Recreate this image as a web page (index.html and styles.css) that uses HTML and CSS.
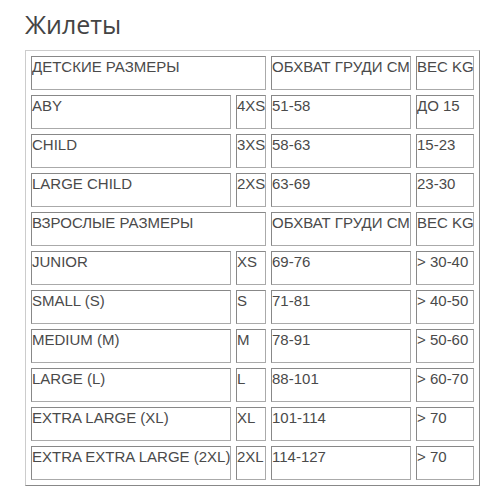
FILE: index.html
```html
<!DOCTYPE html>
<html lang="ru">
<head>
<meta charset="utf-8">
<link rel="stylesheet" href="styles.css">
</head>
<body>
<div class="page">
  <h1 class="title">Жилеты</h1>
  <table class="sizes">
    <colgroup>
      <col class="c1"><col class="c2"><col class="c3"><col class="c4">
    </colgroup>
    <tbody>
      <tr><td colspan="2">ДЕТСКИЕ РАЗМЕРЫ</td><td>ОБХВАТ ГРУДИ СМ</td><td>ВЕС KG</td></tr>
      <tr><td>ABY</td><td>4XS</td><td>51-58</td><td>ДО 15</td></tr>
      <tr><td>CHILD</td><td>3XS</td><td>58-63</td><td>15-23</td></tr>
      <tr><td>LARGE CHILD</td><td>2XS</td><td>63-69</td><td>23-30</td></tr>
      <tr><td colspan="2">ВЗРОСЛЫЕ РАЗМЕРЫ</td><td>ОБХВАТ ГРУДИ СМ</td><td>ВЕС KG</td></tr>
      <tr><td>JUNIOR</td><td>XS</td><td>69-76</td><td>&gt; 30-40</td></tr>
      <tr><td>SMALL (S)</td><td>S</td><td>71-81</td><td>&gt; 40-50</td></tr>
      <tr><td>MEDIUM (M)</td><td>M</td><td>78-91</td><td>&gt; 50-60</td></tr>
      <tr><td>LARGE (L)</td><td>L</td><td>88-101</td><td>&gt; 60-70</td></tr>
      <tr><td>EXTRA LARGE (XL)</td><td>XL</td><td>101-114</td><td>&gt; 70</td></tr>
      <tr><td>EXTRA EXTRA LARGE (2XL)</td><td>2XL</td><td>114-127</td><td>&gt; 70</td></tr>
    </tbody>
  </table>
</div>
</body>
</html>
```
FILE: styles.css
```css
html, body {
  margin: 0;
  padding: 0;
  background: #fff;
}
.page {
  padding: 8px 0 0 25px;
}
.title {
  margin: 0 0 9px 0;
  font-family: "Open Sans", sans-serif;
  font-weight: 400;
  font-size: 25px;
  line-height: 33px;
  color: #444;
}
.sizes {
  width: 455px;
  table-layout: fixed;
  border-collapse: separate;
  border-spacing: 5px;
  border: 1px solid;
  border-color: #ccc #888 #888 #ccc;
  font-family: "Liberation Sans", Arial, sans-serif;
  font-size: 15px;
  color: #4a4a4a;
}
.c1 { width: 200px; }
.c2 { width: 30px; }
.c3 { width: 140px; }
.c4 { width: 58px; }
.sizes td {
  border: 1px solid;
  border-color: #888 #aaa #aaa #888;
  padding: 1px 0 0 0;
  height: 31px;
  vertical-align: top;
  line-height: 17px;
  white-space: nowrap;
  overflow: hidden;
}
```
